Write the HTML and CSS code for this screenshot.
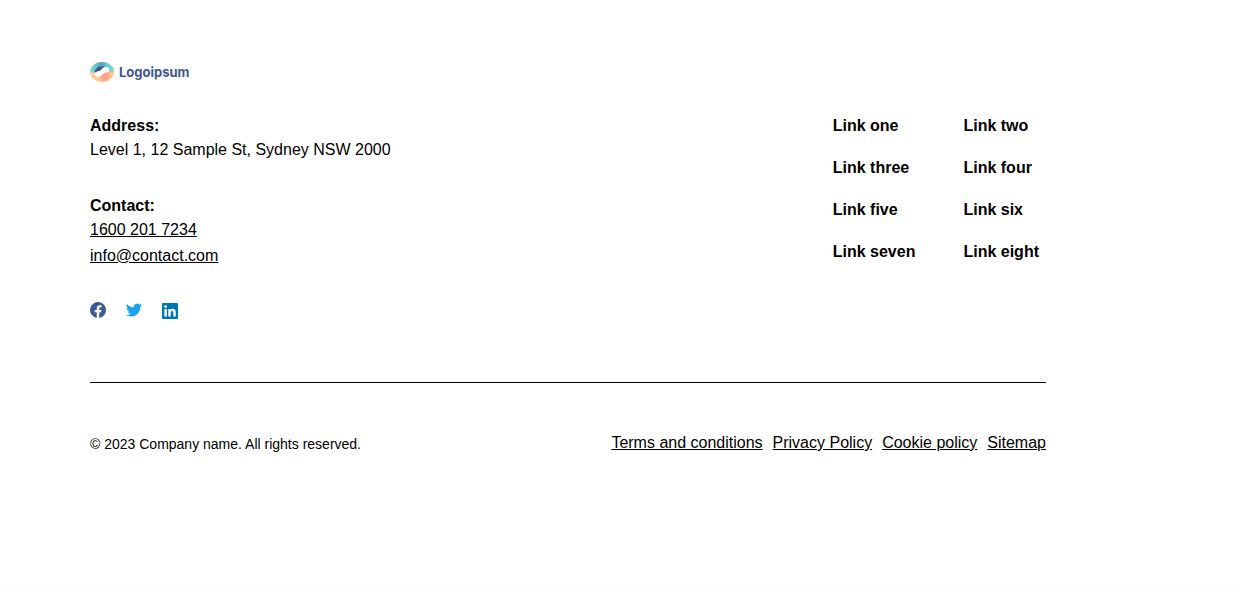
FILE: index.html
```html
<!DOCTYPE html>
<html lang="en">
<head>
<meta charset="utf-8">
<meta name="viewport" content="width=device-width, initial-scale=1">
<title>Footer</title>
<link rel="stylesheet" href="styles.css">
</head>
<body>
<footer class="footer">
  <a class="logo" href="#">
    <svg class="logo-mark" viewBox="0 0 24 20" aria-hidden="true">
      <defs>
        <linearGradient id="teal" x1="0" y1="0" x2="1" y2="0">
          <stop offset="0" stop-color="#86e3d6"/><stop offset=".3" stop-color="#5dbcc8"/><stop offset=".5" stop-color="#5a9fbc"/><stop offset=".75" stop-color="#66cfd8"/><stop offset="1" stop-color="#74dfdc"/>
        </linearGradient>
        <linearGradient id="peach" x1="0" y1="0" x2="1" y2="0">
          <stop offset="0" stop-color="#ffd28a"/><stop offset=".4" stop-color="#ffc08c"/><stop offset=".65" stop-color="#ffa288"/><stop offset="1" stop-color="#ffd08c"/>
        </linearGradient>
      </defs>
      <ellipse cx="12" cy="10" rx="12" ry="10" fill="url(#peach)"/>
      <path d="M0 10.500C0 4.500 5.400 0 12 0S24 4.500 24 9.500L12 10Z" fill="url(#teal)"/>
      <path d="M4.500 11C4.500 7 8 4.200 12 4.200C14 4.200 15.500 4.500 16.500 5.500L12 10.500Z" fill="#3e568c"/>
      <path d="M19.500 9C19.500 13 16 15.800 12 15.800C10 15.800 8.500 15.500 7.500 14.500L12 9.500Z" fill="#ffa088"/>
      <path d="M4.500 11.500C5 9.800 6.800 9.500 8.500 9.200C12 8.600 12 5 15.500 4.800C18.200 4.700 19.500 6.500 19.500 8.500C19 10.200 17.200 10.500 15.500 10.800C12 11.400 12 15 8.500 15.200C5.800 15.300 4.500 13.500 4.500 11.500Z" fill="#fff"/>
    </svg>
    <span class="logo-name">Logoipsum</span>
  </a>
  <div class="main">
    <div class="details">
      <div class="block">
        <strong>Address:</strong>
        <span>Level 1, 12 Sample St, Sydney NSW 2000</span>
      </div>
      <div class="block">
        <strong>Contact:</strong>
        <a href="tel:16002017234">1600 201 7234</a>
        <a class="email" href="mailto:info@contact.com">info@contact.com</a>
      </div>
      <div class="social">
        <a href="#" aria-label="Facebook"><svg viewBox="0 0 16 16"><path fill="#3b5998" d="M16 8a8 8 0 1 0-9.250 7.900v-5.590H4.720V8h2.030V6.240c0-2 1.190-3.110 3.020-3.110.88 0 1.790.16 1.790.16v1.970h-1.010c-1 0-1.300.62-1.300 1.250V8h2.220l-.36 2.310H9.250v5.590A8 8 0 0 0 16 8Z"/></svg></a>
        <a href="#" aria-label="Twitter"><svg viewBox="0 0 16 16"><path fill="#1da1f2" d="M5.030 14.500c6.040 0 9.340-5 9.340-9.340 0-.14 0-.28-.01-.42A6.700 6.700 0 0 0 16 3.040a6.600 6.600 0 0 1-1.890.52 3.300 3.300 0 0 0 1.450-1.820 6.600 6.600 0 0 1-2.090.8 3.290 3.290 0 0 0-5.600 3A9.330 9.330 0 0 1 1.110 2.100a3.290 3.290 0 0 0 1.020 4.390 3.300 3.300 0 0 1-1.490-.41v.04a3.290 3.290 0 0 0 2.640 3.220 3.300 3.300 0 0 1-1.490.06 3.290 3.290 0 0 0 3.070 2.280A6.600 6.600 0 0 1 0 13.030a9.300 9.300 0 0 0 5.030 1.470"/></svg></a>
        <a class="linkedin" href="#" aria-label="LinkedIn"><svg viewBox="0 0 16 16"><rect width="16" height="16" rx="1" fill="#0077b5"/><g fill="#fff"><circle cx="3.600" cy="3.600" r="1.400"/><path d="M2.400 6h2.400v7.600H2.400zM6.300 6h2.300v1.050C8.920 6.440 9.700 5.800 10.870 5.800c2.430 0 2.880 1.600 2.880 3.680v4.120h-2.400V9.900c0-.88-.02-2.010-1.230-2.010-1.220 0-1.410.96-1.410 1.950v3.760H6.300z"/></g></svg></a>
      </div>
    </div>
    <nav class="links" aria-label="Footer">
      <a href="#">Link one</a><a href="#">Link two</a>
      <a href="#">Link three</a><a href="#">Link four</a>
      <a href="#">Link five</a><a href="#">Link six</a>
      <a href="#">Link seven</a><a href="#">Link eight</a>
    </nav>
  </div>
  <div class="bottom">
    <small class="copyright">© 2023 Company name. All rights reserved.</small>
    <nav class="legal" aria-label="Legal">
      <a href="#">Terms and conditions</a>
      <a href="#">Privacy Policy</a>
      <a href="#">Cookie policy</a>
      <a href="#">Sitemap</a>
    </nav>
  </div>
</footer>
</body>
</html>
```
FILE: styles.css
```css
* {
  box-sizing: border-box;
}

body {
  margin: 0;
  min-height: 100vh;
  display: flex;
  flex-direction: column;
  border-bottom: 2px solid #fafafa;
  background: #fff;
  color: #000;
  font: 16px/24px "Liberation Sans", Arial, sans-serif;
}

a {
  color: inherit;
}

.footer {
  padding: 62px 193px 62px 90px;
}

.logo {
  display: flex;
  align-items: center;
  gap: 5px;
  width: max-content;
  height: 20px;
  text-decoration: none;
}

.logo-mark {
  width: 24px;
  height: 20px;
}

.logo-name {
  color: #435590;
  font: 700 13px/20px Inter, sans-serif;
}

.main {
  display: flex;
  justify-content: space-between;
  align-items: flex-start;
  gap: 32px;
  padding: 32px 0 63px;
  border-bottom: 1px solid #000;
}

.block {
  display: flex;
  flex-direction: column;
  align-items: flex-start;
  margin-bottom: 32px;
}

.email {
  margin-top: 2px;
}

.social {
  display: flex;
  gap: 20px;
  padding-top: 2px;
}

.social svg {
  display: block;
  width: 16px;
  height: 16px;
}

.linkedin {
  padding-top: 1px;
}

.links {
  display: grid;
  grid-template-columns: auto auto;
  gap: 18px 48px;
  padding-right: 7px;
  font-weight: 700;
}

.links a {
  text-decoration: none;
}

.bottom {
  display: flex;
  justify-content: space-between;
  align-items: flex-start;
  gap: 24px;
  padding-top: 48px;
}

.copyright {
  padding-top: 1px;
  font-size: 14px;
}

.legal {
  display: flex;
  flex-wrap: wrap;
  gap: 10px;
}
```
